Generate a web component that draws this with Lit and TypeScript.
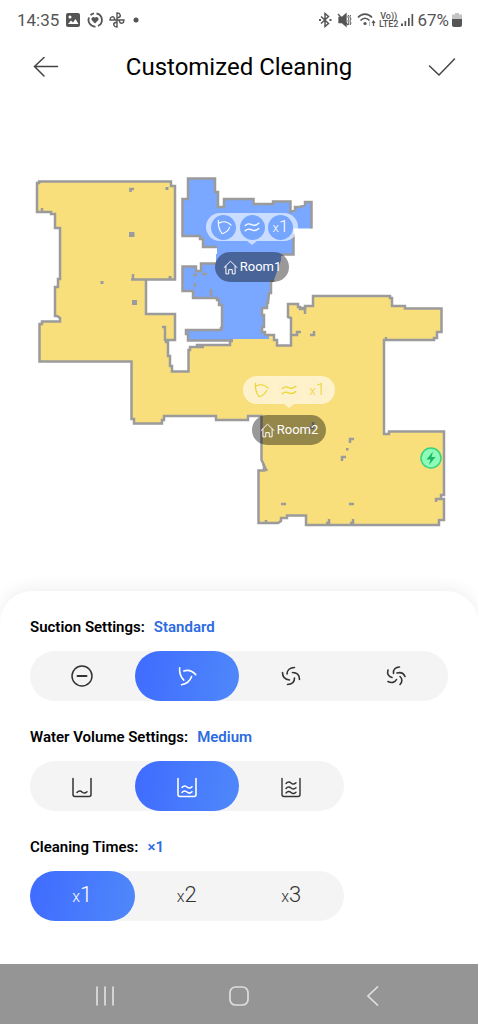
import { LitElement, html, css, svg } from "lit";
import { customElement, property, state } from "lit/decorators.js";

type Option = { value: string; icon: unknown };
type Room = { name: string; tone: string; x: number; y: number };

const stroke = (body: unknown, size = 24, width = 1.5) => html`
  <svg width=${size} height=${size} viewBox="0 0 24 24" fill="none" stroke="currentColor"
    stroke-width=${width} stroke-linecap="round" stroke-linejoin="round" aria-hidden="true">${body}</svg>`;

const fan3 = svg`<path d="M4 3C3.500 8.500 5 13 8.500 16.500M8.500 6.500C13 5 18 6.500 21.500 10.500M17 12.500C15.500 17 12 20.500 6 21.500"/>`;
const fanSmall = svg`<path d="M4.500 3C4 10 6 16.500 9.500 21M6 6.500C11 4 17 5 21.500 9.500M19.500 12.500C18 16.500 14.500 19.500 9.500 21"/>`;
const fan4 = svg`<path d="M15.500 3.500C11 3.500 8 6 8 10M20.500 15.500C20.500 11 18 8.500 13.500 8.500M3.500 8.500C3.500 13 6 15.500 10.500 16M8.500 20.500C13 20.500 15.500 18 15.500 14"/>`;
const fan5 = svg`<path d="M15.500 3C11.500 3 9 5.500 9.500 9.500M21 12.500C19.500 9 16.500 8 13 9M4 6C3 9.500 4 12.500 8 13.500M4 17.500C7.500 19.500 11 18.500 12.500 15.500M16 20.500C18.500 18 18.500 14.500 16 12.500"/>`;
const minus = svg`<circle cx="12" cy="12" r="10"/><path d="M7.500 12h9" stroke-width="2"/>`;
const tank = svg`<path d="M3 4.500V20.500Q3 22.500 5 22.500H19Q21 22.500 21 20.500V4.500"/>`;
const wave = (y: number) =>
  svg`<path d=${`M7 ${y}C9 ${y - 2.5} 11 ${y - 1.5} 12 ${y - 0.5}S15 ${y + 1.2} 17 ${y - 0.8}`}/>`;
const waves = svg`<path d="M3 10C7 6 10 8 12 9S17 10.500 21 7M3 17C7 13 10 15 12 16S17 17.500 21 14"/>`;
const house = svg`<path d="M3 12L12 3L21 12M5.500 10V21H9.500V15H14.500V21H18.500V10"/>`;

const times = (n: number) => html`<span class="times"><span class="by">x</span>${n}</span>`;

@customElement("setting-group")
class SettingGroup extends LitElement {
  @property() label = "";
  @property() name = "";
  @property() selected = "";
  @property({ attribute: false }) options: Option[] = [];

  static styles = css`
    :host { display: block; }
    .group { margin: 0; padding: 0; border: 0; min-width: 0; }
    .legend { display: flex; gap: 9px; padding: 0; margin-bottom: 14px; font-size: 15px; line-height: 20px; font-weight: 600; color: #000; }
    .value { color: #2c6be0; }
    .track { display: grid; grid-template-columns: repeat(4, 1fr); }
    .option { display: flex; align-items: center; justify-content: center; height: 50px; background: #f4f4f4; color: #333; cursor: pointer; }
    .option:first-child { border-radius: 25px 0 0 25px; }
    .option:last-child { border-radius: 0 25px 25px 0; }
    .face { flex: 1; height: 100%; display: flex; align-items: center; justify-content: center; border-radius: 25px; }
    .radio { appearance: none; width: 0; height: 0; margin: 0; outline: none; }
    .radio:checked + .face { background: linear-gradient(100deg, #3f6bff, #4f88fa); color: #fff; }
    .radio:focus-visible + .face { outline: 2px solid #1b4fd0; }
    .times { font-size: 22px; line-height: 26px; font-weight: 300; }
    .by { font-size: 16px; }
  `;

  render() {
    return html`
      <fieldset class="group">
        <legend class="legend"><span>${this.label}:</span><span class="value">${this.selected}</span></legend>
        <div class="track">
          ${this.options.map((o) => html`
            <label class="option">
              <input class="radio" type="radio" name=${this.name} aria-label=${o.value}
                .checked=${o.value === this.selected}
                @change=${() => { this.selected = o.value; }} />
              <span class="face">${o.icon}</span>
            </label>`)}
        </div>
      </fieldset>`;
  }
}

@customElement("room-pin")
class RoomPin extends LitElement {
  @property() name = "";
  @property() tone = "blue";

  static styles = css`
    :host { display: flex; flex-direction: column; align-items: center; width: 92px; }
    .bubble { position: relative; display: flex; justify-content: space-between; align-items: center; align-self: stretch; height: 28px; padding: 0 5px; border-radius: 14px; background: rgb(255 255 255 / 0.6); color: #fff; }
    .bubble::after { content: ""; position: absolute; top: 28px; left: 50%; margin-left: -5px; border: 5px solid transparent; border-top: 4px solid rgb(255 255 255 / 0.6); border-bottom: 0; }
    .dot { display: flex; align-items: center; justify-content: center; width: 25px; height: 25px; border-radius: 50%; background: #76a5fe; }
    .yellow .dot { background: #fdf1cc; color: #e9d52c; }
    .times { font-size: 17px; line-height: 20px; font-weight: 300; }
    .by { font-size: 13px; }
    .tag { display: flex; align-items: center; gap: 1px; height: 30px; margin-top: 11px; padding: 0 8px 0 7px; border: 0; border-radius: 15px; background: rgb(0 0 0 / 0.4); color: #fff; font: 400 13px/20px Roboto, sans-serif; white-space: nowrap; }
  `;

  render() {
    return html`
      <div class="bubble ${this.tone}">
        <span class="dot">${stroke(fanSmall, 18, 1.5)}</span>
        <span class="dot">${stroke(waves, 18, 1.8)}</span>
        <span class="dot">${times(1)}</span>
      </div>
      <button class="tag" type="button">${stroke(house, 17, 1.4)}${this.name}</button>`;
  }
}

@customElement("floor-map")
class FloorMap extends LitElement {
  static styles = css`
    :host { display: block; position: relative; }
    .plan { display: block; width: 100%; height: auto; }
    .pin { position: absolute; transform: translateX(-50%); }
  `;

  rooms: Room[] = [
    { name: "Room1", tone: "blue", x: 252, y: 119 },
    { name: "Room2", tone: "yellow", x: 289, y: 282 },
  ];

  render() {
    return html`
      <svg class="plan" viewBox="0 94 478 497" role="img" aria-label="Floor plan">
        <path fill="#f9df7c" d="M37 183H39V181.500H171V186H175V279.500H146V314H175V340H166V342H168V356H170V366H172V371.500H188.500V350H190V347H197V345H230V341H233V339H268V335H274V340H277V345H291V318L288 317V304H298V307H300V309H305V306H313V296H390V298H392V306H405V308.500H441.500V332H437V338H434V340H384V434H389V431.500H444V495H441V499H444V520H439V525H306V515.500H287V518H281V521L278 523H258.500V470.500H264L261.500 460V416H248V420H216V416H164V420H162V423.500H134V419H131.500V361.500H39.500V324H42V321.500H60V318L57 316H55V287H58V279H60V228H55V214H51V212H37Z"/>
        <path fill="#7aa7ff" d="M188 178.500H215V192H218V207H224V199H253.500V204H273V201.500H290.500V212L295 210V207H300L305 205V202H311.500V228.500H293.500V254.500H281V260L274 280L271 282V293H269L268 303H267V308H262V315H264V327H262V332H265V335H269V339H233V340.500H188V334H186V330H221V328H222V305H219V300H217V298H193V291H182.500V266.500H196V271H201V263.500H216V254H217V247H203V239H200V236H182.500V199H188Z"/>
        <g fill="none" stroke="#9c9b9b" stroke-width="2.500">
          <path d="M268 335H274V340H277V345.500H291V318L288 317V304H298V307H300V309H305V306H313V296H390V298H392V306H405V308.500H441.500V332H437V338H434V340H384V434H389V431.500H444V495H441V499H436V502M442 499H444V520H439V525H306V515.500H287V518H281V521L278 523H258.500V470.500H264V465L261.500 460V416H248V420H216V416H164V420H162V423.500H134V419H131.500V361.500H39.500V324H42V321.500H60V318L57 316H55V287H58V279H60V228H55V214H51V212H37V183H39V181.500H171V186H175V279.500H131M146 279.500V314H175V340H166V342H168V356H170V366H172V371.500H188.500V350H190V347H197V345H230V341H233"/>
          <path d="M233 340.500H188V334H186V330H221V328H222V305H219V300H217V298H193V291H182.500V266.500H196V271H201V263.500H216M217 247H203V239H200V236H182.500V199H188V178.500H215V192H218V207H224V199H253.500V204H273V201.500H290.500V212L295 210V207H300L305 205V202H311.500V228.500M293.500 234V254.500H281M274 280L271 282V293H269L268 303H267V308H262V315H264V327H262V332H265V335H269"/>
          <path d="M162 327H165V341M130.500 192V189H134M133 274V279M42 208V211M197 347H204M291 335H297V332H301M310 335H314V331M300 308H305V314M350 443V439H354M342 461V457H346M281 504H286M349 504H354M326 523H329V519M350 523H353V519M263 464L267 471M266 523V520M308 428H313V422M386 340V337M193 275H197M202 274H207M195 283V287M211 289V296"/>
        </g>
        <path fill="#9c9b9b" d="M129 232H134.500V237H129ZM132 300H137V305H132ZM100.500 281H103.500V284H100.500ZM165.500 187H168.500V190H165.500ZM168.500 276H171.500V279H168.500ZM346 448H348.500V450.500H346Z"/>
        <circle cx="431" cy="458" r="10" fill="#8efbb8" stroke="#35d57e" stroke-width="1.500"/>
        <path fill="#17b968" d="M433 451.500L426.500 459.500H430.500L429 465L435.500 457H431.500Z"/>
      </svg>
      ${this.rooms.map((r) => html`
        <room-pin class="pin" name=${r.name} tone=${r.tone}
          style="left:${(r.x / 478) * 100}%;top:${(r.y / 497) * 100}%"></room-pin>`)}`;
  }
}

@customElement("app-root")
class AppRoot extends LitElement {
  @state() private saved = false;

  static styles = css`
    :host { display: flex; flex-direction: column; min-height: 100vh; background: #fff; color: #000; font-family: Roboto, sans-serif; overflow: hidden; }
    .status { display: flex; align-items: center; justify-content: space-between; height: 40px; padding: 0 16px 0 17px; color: #555; font-size: 17px; line-height: 20px; }
    .cluster { display: flex; align-items: center; gap: 6px; }
    .cluster.right { gap: 3px; }
    .net { display: flex; flex-direction: column; align-items: center; font-size: 9px; line-height: 8px; font-weight: 500; }
    .header { display: grid; grid-template-columns: 48px 1fr 48px; align-items: center; height: 54px; padding: 0 22px; }
    .title { margin: 0; font-size: 24px; line-height: 32px; font-weight: 400; text-align: center; }
    .icon { display: flex; align-items: center; justify-content: center; padding: 0; border: 0; background: none; height: 32px; color: #444; cursor: pointer; }
    .save { justify-content: flex-end; }
    .map { flex: 1 0 auto; }
    .sheet { position: relative; display: flex; flex-direction: column; gap: 26px; padding: 26px 30px 43px; border-radius: 32px 32px 0 0; background: #fff; box-shadow: 0 -4px 16px rgb(0 0 0 / 0.06); }
    .nav { display: grid; grid-template-columns: repeat(3, 134px); justify-content: center; position: relative; height: 60px; background: #959595; }
    .nav .icon { height: 60px; padding-top: 3px; color: #dedede; }
  `;

  private suction: Option[] = [
    { value: "Off", icon: stroke(minus, 24, 1.5) },
    { value: "Standard", icon: stroke(fan3, 22, 1.7) },
    { value: "Strong", icon: stroke(fan4, 24, 1.6) },
    { value: "Max", icon: stroke(fan5, 24, 1.6) },
  ];
  private water: Option[] = [
    { value: "Low", icon: stroke(svg`${tank}${wave(18.5)}`, 24, 1.5) },
    { value: "Medium", icon: stroke(svg`${tank}${wave(18.5)}${wave(13.5)}`, 24, 1.6) },
    { value: "High", icon: stroke(svg`${tank}${wave(19)}${wave(14.5)}${wave(9.5)}`, 24, 1.4) },
  ];
  private counts: Option[] = [1, 2, 3].map((n) => ({ value: `×${n}`, icon: times(n) }));

  render() {
    return html`
      <div class="status">
        <div class="cluster">
          <span>14:35</span>
          <svg width="16" height="16" viewBox="0 0 16 16" aria-hidden="true">
            <rect x="1" y="1" width="14" height="14" rx="2" fill="#555"/>
            <path d="M3 12L6 8.500L8 10.500L10.500 7L13.500 12Z" fill="#fff"/><circle cx="5" cy="5" r="1.500" fill="#fff"/>
          </svg>
          <svg width="16" height="16" viewBox="0 0 16 16" fill="none" stroke="#555" stroke-width="1.800" aria-hidden="true">
            <path d="M9.500 1.500A6.600 6.600 0 0 1 11 14M8.500 14.600A6.600 6.600 0 0 1 2 5.500M3.500 3.200A6.600 6.600 0 0 1 7 1.400"/>
            <path d="M8 11.500L4.800 8.200A1.800 1.800 0 0 1 8 5.800A1.800 1.800 0 0 1 11.200 8.200Z" fill="#555" stroke="none"/>
          </svg>
          <svg width="16" height="16" viewBox="0 0 16 16" fill="none" stroke="#555" stroke-width="1.400" aria-hidden="true">
            <path d="M8 8V1C11.500 1 12.500 4.500 9.500 5.500L8 6M8 8H15C15 11.500 11.500 12.500 10.500 9.500L10 8M8 8V15C4.500 15 3.500 11.500 6.500 10.500L8 10M8 8H1C1 4.500 4.500 3.500 5.500 6.500L6 8"/>
          </svg>
          <svg width="16" height="16" viewBox="0 0 16 16" aria-hidden="true"><circle cx="5" cy="8" r="2.500" fill="#555"/></svg>
        </div>
        <div class="cluster right">
          <svg width="14" height="16" viewBox="0 0 14 16" fill="none" stroke="#555" stroke-width="1.500" aria-hidden="true">
            <path d="M3 4.500L10.500 11.500L7 14.500V1.500L10.500 4.500L3 11.500"/><path d="M1 8H3M11.500 8H13.500" stroke-width="2"/>
          </svg>
          <svg width="19" height="16" viewBox="0 0 19 16" fill="none" stroke="#555" stroke-width="1.300" aria-hidden="true">
            <path d="M4 5.500H7L11 2V14L7 10.500H4Z" fill="#555"/><path d="M3 2L13 13"/>
            <path d="M13.500 3L12.800 5L14 7L12.800 9L14 11L13 13M15.500 3L14.800 5L16 7L14.800 9L16 11L15 13" stroke-width="1"/>
          </svg>
          <svg width="19" height="16" viewBox="0 0 19 16" fill="none" stroke="#555" stroke-width="1.600" aria-hidden="true">
            <path d="M1 5.500C5 1 11 1 15 5.500M3.500 8.500C6.500 5.500 9.500 5.500 12.500 8.500"/>
            <circle cx="8" cy="11.500" r="1.600" fill="#555" stroke="none"/>
            <path d="M16.500 14V9.500M15 11L16.500 9L18 11" stroke-width="1.200"/><path d="M12.500 9.500V14" stroke="#bbb" stroke-width="1"/>
          </svg>
          <span class="net"><span>Vo))</span><span>LTE2</span></span>
          <svg width="13" height="16" viewBox="0 0 13 16" fill="#555" aria-hidden="true">
            <path d="M0 11.500H2V14H0ZM3.500 9H5.200V14H3.500ZM7 6H8.700V14H7ZM10.500 2H12.200V14H10.500Z"/>
          </svg>
          <span>67%</span>
          <svg width="10" height="16" viewBox="0 0 10 16" aria-hidden="true">
            <path d="M3 1H7V2.500H10V8H0V2.500H3Z" fill="#c4c4c4"/><path d="M0 7H10V13Q10 15 8 15H2Q0 15 0 13Z" fill="#555"/>
          </svg>
        </div>
      </div>
      <header class="header">
        <button class="icon" type="button" aria-label="Back">
          <svg width="26" height="22" viewBox="0 0 26 22" fill="none" stroke="currentColor" stroke-width="1.500" stroke-linecap="round"><path d="M11 1.500L1.500 10.500L11 20M1.500 10.500H24.500"/></svg>
        </button>
        <h1 class="title">Customized Cleaning</h1>
        <button class="icon save" type="button" aria-label="Save" aria-pressed=${this.saved ? "true" : "false"} @click=${() => { this.saved = true; }}>
          <svg width="28" height="20" viewBox="0 0 28 20" fill="none" stroke="currentColor" stroke-width="1.500" stroke-linecap="round"><path d="M1.500 9L11 18L26.500 2"/></svg>
        </button>
      </header>
      <floor-map class="map"></floor-map>
      <main class="sheet">
        <setting-group label="Suction Settings" name="suction" selected="Standard" .options=${this.suction}></setting-group>
        <setting-group label="Water Volume Settings" name="water" selected="Medium" .options=${this.water}></setting-group>
        <setting-group label="Cleaning Times" name="times" selected="×1" .options=${this.counts}></setting-group>
      </main>
      <nav class="nav">
        <button class="icon" type="button" aria-label="Recent apps">
          <svg width="20" height="20" viewBox="0 0 20 20" fill="none" stroke="currentColor" stroke-width="1.700"><path d="M2 .500V19.500M10 .500V19.500M18 .500V19.500"/></svg>
        </button>
        <button class="icon" type="button" aria-label="Home">
          <svg width="20" height="20" viewBox="0 0 20 20" fill="none" stroke="currentColor" stroke-width="1.700"><rect x="1" y="1" width="18" height="18" rx="5.500"/></svg>
        </button>
        <button class="icon" type="button" aria-label="Go back">
          <svg width="20" height="20" viewBox="0 0 20 20" fill="none" stroke="currentColor" stroke-width="1.700"><path d="M15 .500L5 10L15 19.500"/></svg>
        </button>
      </nav>`;
  }
}
